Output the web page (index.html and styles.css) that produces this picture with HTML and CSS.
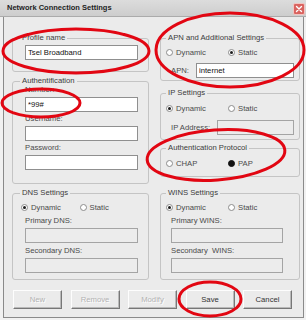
FILE: index.html
```html
<!DOCTYPE html>
<html>
<head>
    <title>Network Connection Settings</title>
    <link rel="stylesheet" href="styles.css">
</head>
<body>
    <div class="window">
        <div class="titlebar">
            <span class="title">Network Connection Settings</span>
            <span class="close">
                <svg width="12" height="12" viewBox="0 0 12 12">
                    <rect x="0.5" y="0.5" width="11" height="11" rx="1.5" fill="#d9635f" stroke="#f2c4c0"/>
                    <path d="M3.5 3.5 L8.5 8.5 M8.5 3.5 L3.5 8.5" stroke="#fff" stroke-width="1.4" stroke-linecap="round"/>
                </svg>
            </span>
        </div>
        <div class="client">
            <div class="columns">
                <div class="column">
                    <div class="group profile">
                        <div class="legend">Profile name</div>
                        <input class="text" type="text" value="Tsel Broadband">
                    </div>
                    <div class="group auth">
                        <div class="legend">Authentification</div>
                        <div class="field">
                            <label>Number:</label>
                            <input class="text" type="text" value="*99#">
                        </div>
                        <div class="field">
                            <label>Username:</label>
                            <input class="text" type="text">
                        </div>
                        <div class="field">
                            <label>Password:</label>
                            <input class="text" type="password">
                        </div>
                    </div>
                </div>
                <div class="column">
                    <div class="group right apn">
                        <div class="legend">APN and Additional Settings</div>
                        <div class="radios">
                            <span class="option"><span class="radio"></span>Dynamic</span>
                            <span class="option"><span class="radio checked"></span>Static</span>
                        </div>
                        <div class="inline">
                            <label class="apn-label">APN:</label>
                            <input class="text" type="text" value="internet">
                        </div>
                    </div>
                    <div class="group right ip">
                        <div class="legend">IP Settings</div>
                        <div class="radios">
                            <span class="option"><span class="radio checked"></span>Dynamic</span>
                            <span class="option"><span class="radio"></span>Static</span>
                        </div>
                        <div class="inline">
                            <label class="ip-label">IP Address:</label>
                            <input class="text" type="text" disabled>
                        </div>
                    </div>
                    <div class="group right protocol">
                        <div class="legend">Authentication Protocol</div>
                        <div class="radios">
                            <span class="option"><span class="radio"></span>CHAP</span>
                            <span class="option"><span class="radio solid"></span>PAP</span>
                        </div>
                    </div>
                </div>
            </div>

            <div class="columns lower">
                <div class="group servers">
                    <div class="legend">DNS Settings</div>
                    <div class="radios">
                        <span class="option"><span class="radio checked"></span>Dynamic</span>
                        <span class="option"><span class="radio"></span>Static</span>
                    </div>
                    <div class="field">
                        <label>Primary DNS:</label>
                        <input class="text" type="text" disabled>
                    </div>
                    <div class="field">
                        <label>Secondary DNS:</label>
                        <input class="text" type="text" disabled>
                    </div>
                </div>
                <div class="group right servers">
                    <div class="legend">WINS Settings</div>
                    <div class="radios">
                        <span class="option"><span class="radio checked"></span>Dynamic</span>
                        <span class="option"><span class="radio"></span>Static</span>
                    </div>
                    <div class="field">
                        <label>Primary WINS:</label>
                        <input class="text wins" type="text" disabled>
                    </div>
                    <div class="field">
                        <label>Secondary &nbsp;WINS:</label>
                        <input class="text wins" type="text" disabled>
                    </div>
                </div>
            </div>

            <div class="buttons">
                <button disabled>New</button>
                <button disabled>Remove</button>
                <button disabled>Modify</button>
                <button>Save</button>
                <button>Cancel</button>
            </div>
        </div>
    </div>

    <!-- red marker circles drawn over the dialog -->
    <svg class="marks" width="306" height="320" viewBox="0 0 306 320">
        <ellipse cx="76" cy="51" rx="73" ry="22"/>
        <ellipse cx="230" cy="50" rx="74" ry="37"/>
        <ellipse cx="41" cy="103" rx="39" ry="14"/>
        <ellipse cx="216" cy="155" rx="69" ry="25" transform="rotate(-4 216 155)"/>
        <ellipse cx="210" cy="299" rx="31" ry="17"/>
    </svg>
</body>
</html>
```

FILE: styles.css
```css
:root {
    --face: #ebebeb;
    --line: #c4c4c4;
    --text: #4a4a4a;
    --marker: #e20612;
}

* { box-sizing: border-box; margin: 0; padding: 0; }

body {
    position: relative;
    width: 306px;
    height: 320px;
    overflow: hidden;
    background: #f1f1f1;
    font-family: "Liberation Sans", Arial, sans-serif;
    font-size: 7.7px;
    color: var(--text);
}

.window {
    width: 306px;
    height: 320px;
}

.titlebar {
    height: 17px;
    display: flex;
    align-items: flex-end;
    justify-content: space-between;
    padding: 0 1px 1px 7px;
    background: linear-gradient(#dcdcdc, #cdcdcd);
    border-bottom: 1px solid #ababab;
}

.title {
    align-self: center;
    font-weight: bold;
    font-size: 7.5px;
    color: #1e1e1e;
}

.close {
    display: flex;
    width: 12px;
    height: 12px;
}

.client {
    width: 301px;
    height: 301px;
    margin-left: 3px;
    padding: 0 3px 0 8px;
    background: var(--face);
    border: 1px solid #8a8a8a;
    border-top: none;
}

.columns {
    display: grid;
    grid-template-columns: 137px 140px;
    column-gap: 11px;
    align-items: start;
}

.column {
    display: flex;
    flex-direction: column;
}

/* --top: space between the border line and the first row */
.group {
    --top: 0px;
    border: 1px solid var(--line);
    border-radius: 3px;
    padding-left: 12px;
    padding-right: 10px;
}

.group.right {
    padding-left: 10px;
    padding-right: 5px;
}

.legend {
    display: table;
    margin: -6px 0 calc(var(--top) - 3px) -5px;
    padding: 0 2px;
    line-height: 9px;
    background: var(--face);
    color: #3c3c3c;
}

label {
    display: block;
    line-height: 12px;
}

.text {
    display: block;
    width: 100%;
    height: 15px;
    padding: 0 2px;
    border: 1px solid #8f8f8f;
    background: #fff;
    font-family: inherit;
    font-size: 7.7px;
    color: #111;
    outline: none;
}

.text:disabled {
    background: #ececec;
    border-color: #a4a4a4;
}

/* group boxes, placed by their top border line */
.profile { --top: 6px; margin-top: 21px; padding-bottom: 11px; }
.auth { --top: 3px; margin-top: 9px; padding-bottom: 13px; }
.auth .field label { line-height: 9px; margin-bottom: 3px; }
.auth .field + .field { margin-top: 2px; }

.apn { --top: 7px; margin-top: 21px; padding-bottom: 2px; }
.apn .inline { margin-top: 4px; }
.ip { --top: 8px; margin-top: 12px; padding-bottom: 4px; }
.ip .inline { margin-top: 5px; }
.protocol { --top: 8px; margin-top: 8px; padding-bottom: 6px; }

.lower { margin-top: 9px; }
.servers { --top: 7px; padding-bottom: 6px; }
.servers .radios { margin-bottom: 1px; }
.servers .field label { margin-bottom: 1px; }
.servers .field + .field { margin-top: 2px; }
.text.wins { width: 112px; }

.radios {
    display: flex;
    line-height: 13px;
    margin-left: -4px;
}

.group.right .radios {
    margin-left: -5px;
}

.option {
    display: inline-flex;
    align-items: center;
    gap: 3px;
    width: 62px;
}

.radio {
    width: 7px;
    height: 7px;
    border-radius: 50%;
    border: 1px solid #8c8c8c;
    background: #fff;
    display: flex;
    align-items: center;
    justify-content: center;
}

.radio.checked::after {
    content: "";
    width: 3px;
    height: 3px;
    border-radius: 50%;
    background: #1c1c1c;
}

.radio.solid {
    background: #111;
    border-color: #111;
}

.inline {
    display: flex;
    align-items: center;
}

.inline label {
    flex: none;
}

.apn-label { width: 25px; }
.ip-label { width: 46px; }

.buttons {
    display: flex;
    gap: 8.5px;
    margin-top: 10px;
    padding-left: 1px;
}

button {
    width: 49px;
    height: 19px;
    background: var(--face);
    border: 1px solid;
    border-color: #fdfdfd #777 #777 #fdfdfd;
    box-shadow: inset -1px -1px #b9b9b9;
    font-family: inherit;
    font-size: 7.7px;
    color: #333;
}

button:disabled {
    color: #b2b2b2;
    text-shadow: 1px 1px #fff;
}

.marks {
    position: absolute;
    top: 0;
    left: 0;
    pointer-events: none;
}

.marks ellipse {
    fill: none;
    stroke: var(--marker);
    stroke-width: 3;
}
```
